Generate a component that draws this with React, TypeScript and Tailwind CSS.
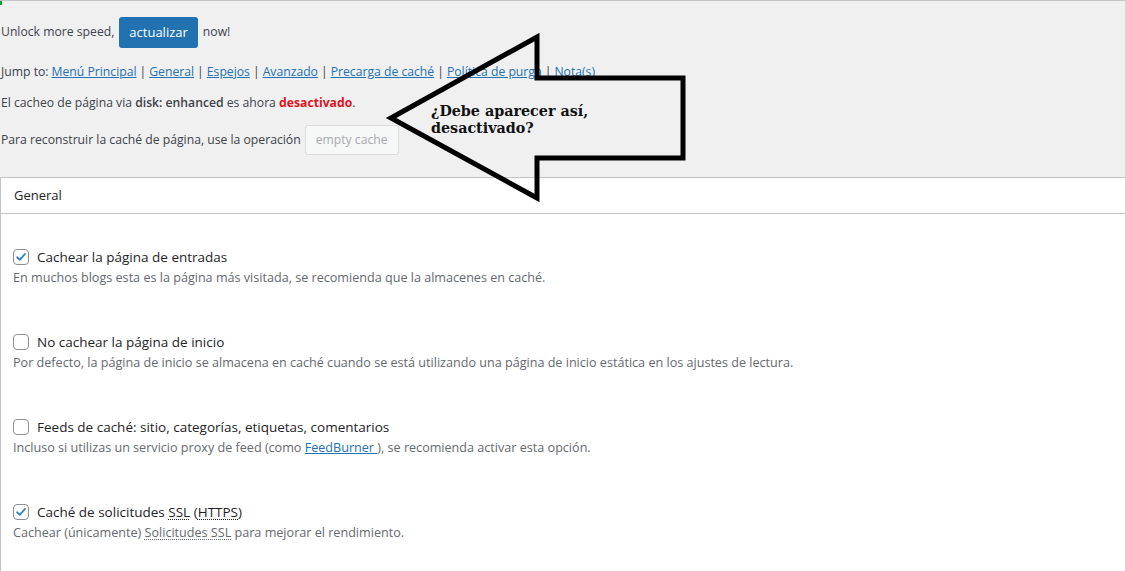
import React from 'react';

const font = { fontFamily: '"Open Sans", "Noto Sans", sans-serif' };

function Check({ checked }: { checked: boolean }) {
  return (
    <span className="flex h-4 w-4 shrink-0 items-center justify-center rounded-[4px] border border-[#8c8f94] bg-white">
      {checked && (
        <svg viewBox="0 0 16 16" className="h-[14px] w-[14px]">
          <path d="M3.5 8.3 L6.6 11.2 L12.6 4.4" fill="none" stroke="#3582c4" strokeWidth="2" strokeLinecap="round" strokeLinejoin="round" />
        </svg>
      )}
    </span>
  );
}

function Option({ checked, label, children }: { checked: boolean; label: React.ReactNode; children: React.ReactNode }) {
  return (
    <div className="mb-[43px]">
      <div className="flex h-5 items-center gap-2 pl-3 text-[13.5px] text-[#1d2327]">
        <Check checked={checked} />
        <span>{label}</span>
      </div>
      <div className="flex h-[22px] items-center pl-3 text-[#646970]">{children}</div>
    </div>
  );
}

const Abbr = ({ children }: { children: React.ReactNode }) => (
  <span className="underline decoration-dotted decoration-1 underline-offset-2">{children}</span>
);

export default function App() {
  const links = ['Menú Principal', 'General', 'Espejos', 'Avanzado', 'Precarga de caché', 'Política de purga', 'Nota(s)'];

  return (
    <div className="relative flex h-[571px] w-[1125px] flex-col overflow-hidden border-t border-[#c3c4c7] bg-[#f0f0f1] text-[12.6px] text-[#3c434a]" style={font}>
      <div className="absolute left-0 top-0 h-[4px] w-[2px] bg-[#00a32a]" />

      <div className="pl-px text-[12.2px]">
        <div className="mt-[16px] flex h-[31px] items-center">
          <span>Unlock more speed,</span>
          <span className="mx-[5px] flex h-[31px] items-center rounded-[3px] bg-[#2271b1] px-[10px] text-[13px] text-white">actualizar</span>
          <span>now!</span>
        </div>

        <div className="mt-[14px] flex h-5 items-center">
          <span className="mr-[3px]">Jump to:</span>
          {links.map((l, i) => (
            <span key={l} className="flex items-center">
              {i > 0 && <span className="mx-[3px]">|</span>}
              <a className="text-[#2271b1] underline">{l}</a>
            </span>
          ))}
        </div>

        <div className="mt-[11px] flex h-5 items-center">
          <span>
            El cacheo de página via <b className="font-semibold">disk: enhanced</b> es ahora{' '}
            <b className="font-bold text-[#e0121c]">desactivado</b>.
          </span>
        </div>

        <div className="mt-[12px] flex h-[30px] items-center">
          <span>Para reconstruir la caché de página, use la operación</span>
          <span className="ml-[4px] flex h-[30px] items-center rounded-[3px] border border-[#dcdcde] bg-[#f6f7f7] px-[10px] text-[#a7aaad]">
            empty cache
          </span>
        </div>
      </div>

      <div className="mt-[22px] flex-1 border-l border-t border-[#c3c4c7] bg-white">
        <div className="flex h-9 items-center border-b border-[#c3c4c7] pl-[13px] text-[13px] text-[#1d2327]">General</div>
        <div className="pt-[33px]">
          <Option checked label="Cachear la página de entradas">
            En muchos blogs esta es la página más visitada, se recomienda que la almacenes en caché.
          </Option>
          <Option checked={false} label="No cachear la página de inicio">
            Por defecto, la página de inicio se almacena en caché cuando se está utilizando una página de inicio estática en los ajustes de lectura.
          </Option>
          <Option checked={false} label="Feeds de caché: sitio, categorías, etiquetas, comentarios">
            <span>
              Incluso si utilizas un servicio proxy de feed (como <a className="text-[#2271b1] underline">FeedBurner </a>), se recomienda activar esta opción.
            </span>
          </Option>
          <Option
            checked
            label={
              <>
                Caché de solicitudes <Abbr>SSL</Abbr> (<Abbr>HTTPS</Abbr>)
              </>
            }
          >
            <span>
              Cachear (únicamente) <Abbr>Solicitudes SSL</Abbr> para mejorar el rendimiento.
            </span>
          </Option>
        </div>
      </div>

      {/* annotation arrow drawn over the page */}
      <svg className="absolute left-0 top-0" width="1125" height="571">
        <polygon
          points="391,117 537,36 537,77 683,77 683,157 537,157 537,197"
          fill="none"
          stroke="#000"
          strokeWidth="5"
          strokeLinejoin="miter"
        />
      </svg>
      <div
        className="absolute left-[431px] top-[102px] text-[14.3px] font-bold leading-[17px] text-[#111]"
        style={{ fontFamily: '"DejaVu Serif", "Liberation Serif", serif' }}
      >
        ¿Debe aparecer así,
        <br />
        desactivado?
      </div>
    </div>
  );
}
